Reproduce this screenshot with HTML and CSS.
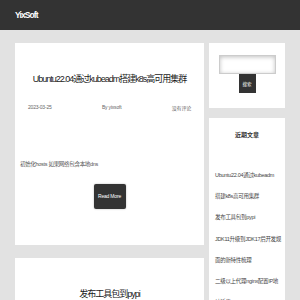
FILE: index.html
```html
<!DOCTYPE html>
<html lang="zh-CN">
<head>
  <meta charset="UTF-8">
  <title>YixSoft</title>
  <link rel="stylesheet" href="styles.css">
</head>
<body>

  <!-- TOP BAR -->
  <header class="topbar">
    <a class="brand" href="#">YixSoft</a>
  </header>

  <div class="wrap">

    <!-- POSTS -->
    <main class="posts">
      <article class="card post">
        <h2 class="post-title">Ubuntu22.04通过kubeadm搭建k8s高可用集群</h2>
        <div class="meta">
          <span>2023-03-25</span>
          <span>By yixsoft</span>
          <span>没有评论</span>
        </div>
        <p class="excerpt">初始化hosts 如果网络包含本地dns</p>
        <div class="more">
          <a class="btn" href="#">Read More</a>
        </div>
      </article>

      <article class="card post">
        <h2 class="post-title">发布工具包到pypi</h2>
      </article>
    </main>

    <!-- SIDEBAR -->
    <aside class="sidebar">
      <div class="card search">
        <input type="text" class="search-input">
        <button class="search-btn">搜索</button>
      </div>

      <div class="card recent">
        <h3>近期文章</h3>
        <ul>
          <li>Ubuntu22.04通过kubeadm</li>
          <li>搭建k8s高可用集群</li>
          <li>发布工具包到pypi</li>
          <li>JDK11升级到JDK17后开发规</li>
          <li>面的新特性梳理</li>
          <li>二级以上代理nginx配置IP地</li>
          <li>址透传</li>
        </ul>
      </div>
    </aside>

  </div>

</body>
</html>
```

FILE: styles.css
```css
body {
  margin: 0;
  background: #e2e2e2;
  font-family: "Liberation Sans", "Noto Sans CJK SC", sans-serif;
  color: #333;
  overflow: hidden;
}

.topbar {
  height: 30px;
  background: #333;
  padding: 0 15px;
  display: flex;
  align-items: center;
}

.brand {
  color: #fff;
  text-decoration: none;
  font-weight: bold;
  font-size: 8.5px;
  letter-spacing: -0.9px;
}

.wrap {
  display: flex;
  gap: 5px;
  padding: 13px 15px;
}

.card {
  background: #fff;
}

.posts {
  width: 189px;
  display: flex;
  flex-direction: column;
  gap: 13px;
}

.post {
  padding: 30px 13px 36px 13px;
}

.post-title {
  margin: 0;
  text-align: center;
  font-size: 9px;
  font-weight: normal;
  color: #1a1a1a;
  line-height: 12px;
  white-space: nowrap;
  letter-spacing: -1px;
}

.meta {
  display: flex;
  justify-content: space-between;
  margin-top: 19px;
  font-size: 5px;
  color: #666;
  letter-spacing: -0.2px;
}

.excerpt {
  margin: 49px 0 0 -8px;
  font-size: 5.5px;
  color: #555;
  letter-spacing: -0.3px;
}

.more {
  text-align: center;
  margin-top: 16px;
}

.btn {
  display: inline-block;
  width: 32px;
  height: 25px;
  line-height: 25px;
  background: #333;
  color: #fff;
  border-radius: 2px;
  font-size: 5px;
  text-decoration: none;
  letter-spacing: -0.2px;
  box-shadow: 0 0 2px rgba(0,0,0,0.3);
}

.sidebar {
  width: 76px;
  display: flex;
  flex-direction: column;
  gap: 10px;
}

.search {
  padding: 12px 0 15px;
  display: flex;
  flex-direction: column;
  align-items: center;
}

.search-input {
  box-sizing: border-box;
  width: 57px;
  height: 19px;
  margin: 0;
  border: 1px solid #ccc;
  box-shadow: inset 0 1px 4px rgba(0,0,0,0.25);
  padding: 0;
}

.search-btn {
  width: 17px;
  height: 19px;
  padding: 0;
  border: none;
  background: #333;
  color: #fff;
  font-size: 4.5px;
  font-family: "Noto Sans CJK SC", sans-serif;
}

.recent {
  padding: 12px 0 0 6px;
  height: 200px;
}

.recent h3 {
  margin: 0 0 0 -6px;
  text-align: center;
  font-size: 6px;
  font-weight: bold;
  color: #333;
}

.recent ul {
  list-style: none;
  margin: 32px 0 0;
  padding: 0;
}

.recent li {
  font-size: 5.5px;
  color: #444;
  height: 21.2px;
  white-space: nowrap;
  letter-spacing: -0.3px;
}
```
